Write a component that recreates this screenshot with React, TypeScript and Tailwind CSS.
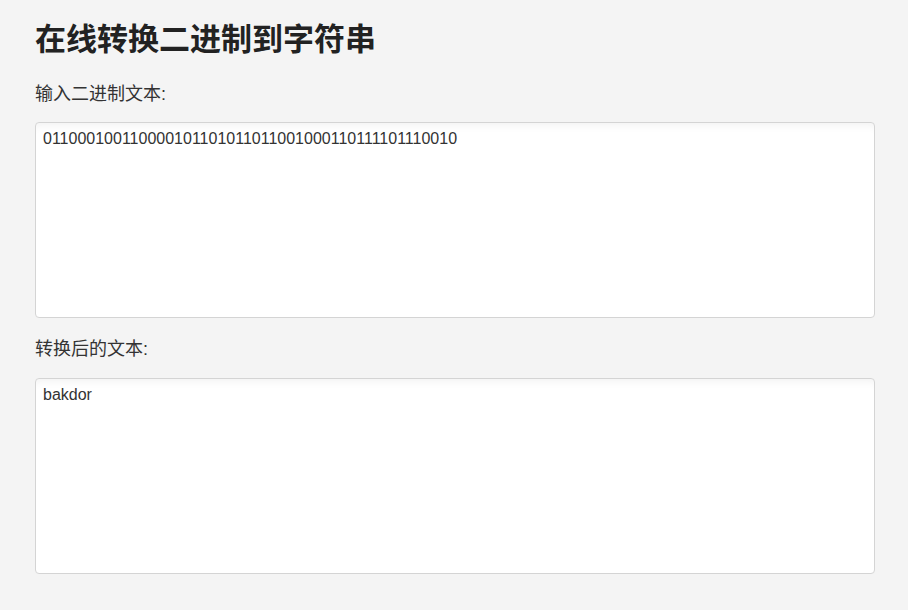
import { useState } from 'react';

const font = { fontFamily: '"Liberation Sans", "Noto Sans CJK SC", sans-serif' };

export default function App() {
  const [binary, setBinary] = useState('011000100110000101101011011001000110111101110010');

  const text = binary
    .replace(/[^01]/g, '')
    .match(/.{1,8}/g)
    ?.map((b) => String.fromCharCode(parseInt(b, 2)))
    .join('') ?? '';

  return (
    <div className="min-h-[610px] bg-[#f4f4f4] px-[35px] pt-[18px] text-[#333]" style={font}>
      <h1 className="text-[31px] font-bold leading-[44px] text-[#222]">在线转换二进制到字符串</h1>

      <label className="mt-[20px] block text-[18px] leading-[24px]">输入二进制文本:</label>
      <textarea
        value={binary}
        onChange={(e) => setBinary(e.target.value)}
        className="mt-[16px] block h-[196px] w-[840px] resize-none rounded border border-[#d4d4d4] bg-white px-[7px] py-[5px] text-[16px] leading-[22px] text-[#333] shadow-[inset_0_10px_10px_-8px_rgba(0,0,0,0.06)] outline-none"
        style={font}
      />

      <label className="mt-[19px] block text-[18px] leading-[24px]">转换后的文本:</label>
      <textarea
        readOnly
        value={text}
        className="mt-[17px] block h-[196px] w-[840px] resize-none rounded border border-[#d4d4d4] bg-white px-[7px] py-[5px] text-[16px] leading-[22px] text-[#333] shadow-[inset_0_10px_10px_-8px_rgba(0,0,0,0.06)] outline-none"
        style={font}
      />
    </div>
  );
}
